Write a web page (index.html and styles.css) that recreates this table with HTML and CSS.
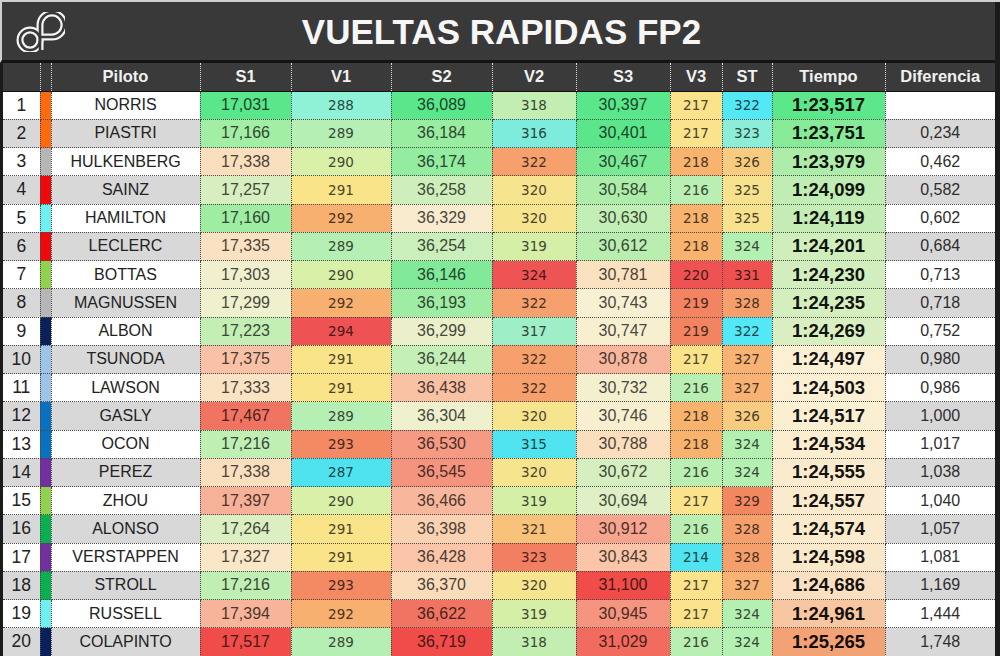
FILE: index.html
```html
<!DOCTYPE html>
<html lang="es">
<head>
<meta charset="utf-8">
<title>Vueltas Rapidas FP2</title>
<link rel="stylesheet" href="styles.css">
</head>
<body>
<div class="sheet">
  <header class="title">
    <div class="logo-cell">
      <svg class="logo" viewBox="0 0 50 40" width="50" height="40" aria-label="dP">
        <g fill="none" stroke="#f4f4f4" stroke-width="7" stroke-linecap="butt">
          <path d="M25,38 V13 A12,12 0 1 1 37,25 H25"/>
          <circle cx="15" cy="28" r="10"/>
        </g>
        <g fill="none" stroke="#393939" stroke-width="2.6">
          <path d="M25,38 V13 A12,12 0 1 1 37,25 H25"/>
          <circle cx="15" cy="28" r="10"/>
        </g>
      </svg>
    </div>
    <h1 class="heading">VUELTAS RAPIDAS FP2</h1>
    <div></div>
  </header>
  <table class="grid">
    <colgroup>
      <col class="w-pos"><col class="w-bar"><col class="w-name"><col class="w-s1"><col class="w-v1"><col class="w-s2"><col class="w-v2"><col class="w-s3"><col class="w-v3"><col class="w-st"><col class="w-tm"><col class="w-dif">
    </colgroup>
    <thead>
      <tr><th></th><th></th><th>Piloto</th><th>S1</th><th>V1</th><th>S2</th><th>V2</th><th>S3</th><th>V3</th><th>ST</th><th>Tiempo</th><th>Diferencia</th></tr>
    </thead>
    <tbody>
      <tr><td class="pos">1</td><td class="bar t-mcl"></td><td class="name">NORRIS</td><td class="sec s1">17,031</td><td class="spd v1">288</td><td class="sec s2">36,089</td><td class="spd v2">318</td><td class="sec s3">30,397</td><td class="spd v3">217</td><td class="spd st">322</td><td class="tm">1:23,517</td><td class="dif"></td></tr>
      <tr><td class="pos">2</td><td class="bar t-mcl"></td><td class="name">PIASTRI</td><td class="sec s1">17,166</td><td class="spd v1">289</td><td class="sec s2">36,184</td><td class="spd v2">316</td><td class="sec s3">30,401</td><td class="spd v3">217</td><td class="spd st">323</td><td class="tm">1:23,751</td><td class="dif">0,234</td></tr>
      <tr><td class="pos">3</td><td class="bar t-haas"></td><td class="name">HULKENBERG</td><td class="sec s1">17,338</td><td class="spd v1">290</td><td class="sec s2">36,174</td><td class="spd v2">322</td><td class="sec s3">30,467</td><td class="spd v3">218</td><td class="spd st">326</td><td class="tm">1:23,979</td><td class="dif">0,462</td></tr>
      <tr><td class="pos">4</td><td class="bar t-fer"></td><td class="name">SAINZ</td><td class="sec s1">17,257</td><td class="spd v1">291</td><td class="sec s2">36,258</td><td class="spd v2">320</td><td class="sec s3">30,584</td><td class="spd v3">216</td><td class="spd st">325</td><td class="tm">1:24,099</td><td class="dif">0,582</td></tr>
      <tr><td class="pos">5</td><td class="bar t-merc"></td><td class="name">HAMILTON</td><td class="sec s1">17,160</td><td class="spd v1">292</td><td class="sec s2">36,329</td><td class="spd v2">320</td><td class="sec s3">30,630</td><td class="spd v3">218</td><td class="spd st">325</td><td class="tm">1:24,119</td><td class="dif">0,602</td></tr>
      <tr><td class="pos">6</td><td class="bar t-fer"></td><td class="name">LECLERC</td><td class="sec s1">17,335</td><td class="spd v1">289</td><td class="sec s2">36,254</td><td class="spd v2">319</td><td class="sec s3">30,612</td><td class="spd v3">218</td><td class="spd st">324</td><td class="tm">1:24,201</td><td class="dif">0,684</td></tr>
      <tr><td class="pos">7</td><td class="bar t-sau"></td><td class="name">BOTTAS</td><td class="sec s1">17,303</td><td class="spd v1">290</td><td class="sec s2">36,146</td><td class="spd v2">324</td><td class="sec s3">30,781</td><td class="spd v3">220</td><td class="spd st">331</td><td class="tm">1:24,230</td><td class="dif">0,713</td></tr>
      <tr><td class="pos">8</td><td class="bar t-haas"></td><td class="name">MAGNUSSEN</td><td class="sec s1">17,299</td><td class="spd v1">292</td><td class="sec s2">36,193</td><td class="spd v2">322</td><td class="sec s3">30,743</td><td class="spd v3">219</td><td class="spd st">328</td><td class="tm">1:24,235</td><td class="dif">0,718</td></tr>
      <tr><td class="pos">9</td><td class="bar t-wil"></td><td class="name">ALBON</td><td class="sec s1">17,223</td><td class="spd v1">294</td><td class="sec s2">36,299</td><td class="spd v2">317</td><td class="sec s3">30,747</td><td class="spd v3">219</td><td class="spd st">322</td><td class="tm">1:24,269</td><td class="dif">0,752</td></tr>
      <tr><td class="pos">10</td><td class="bar t-rb"></td><td class="name">TSUNODA</td><td class="sec s1">17,375</td><td class="spd v1">291</td><td class="sec s2">36,244</td><td class="spd v2">322</td><td class="sec s3">30,878</td><td class="spd v3">217</td><td class="spd st">327</td><td class="tm">1:24,497</td><td class="dif">0,980</td></tr>
      <tr><td class="pos">11</td><td class="bar t-rb"></td><td class="name">LAWSON</td><td class="sec s1">17,333</td><td class="spd v1">291</td><td class="sec s2">36,438</td><td class="spd v2">322</td><td class="sec s3">30,732</td><td class="spd v3">216</td><td class="spd st">327</td><td class="tm">1:24,503</td><td class="dif">0,986</td></tr>
      <tr><td class="pos">12</td><td class="bar t-alp"></td><td class="name">GASLY</td><td class="sec s1">17,467</td><td class="spd v1">289</td><td class="sec s2">36,304</td><td class="spd v2">320</td><td class="sec s3">30,746</td><td class="spd v3">218</td><td class="spd st">326</td><td class="tm">1:24,517</td><td class="dif">1,000</td></tr>
      <tr><td class="pos">13</td><td class="bar t-alp"></td><td class="name">OCON</td><td class="sec s1">17,216</td><td class="spd v1">293</td><td class="sec s2">36,530</td><td class="spd v2">315</td><td class="sec s3">30,788</td><td class="spd v3">218</td><td class="spd st">324</td><td class="tm">1:24,534</td><td class="dif">1,017</td></tr>
      <tr><td class="pos">14</td><td class="bar t-rbr"></td><td class="name">PEREZ</td><td class="sec s1">17,338</td><td class="spd v1">287</td><td class="sec s2">36,545</td><td class="spd v2">320</td><td class="sec s3">30,672</td><td class="spd v3">216</td><td class="spd st">324</td><td class="tm">1:24,555</td><td class="dif">1,038</td></tr>
      <tr><td class="pos">15</td><td class="bar t-sau"></td><td class="name">ZHOU</td><td class="sec s1">17,397</td><td class="spd v1">290</td><td class="sec s2">36,466</td><td class="spd v2">319</td><td class="sec s3">30,694</td><td class="spd v3">217</td><td class="spd st">329</td><td class="tm">1:24,557</td><td class="dif">1,040</td></tr>
      <tr><td class="pos">16</td><td class="bar t-am"></td><td class="name">ALONSO</td><td class="sec s1">17,264</td><td class="spd v1">291</td><td class="sec s2">36,398</td><td class="spd v2">321</td><td class="sec s3">30,912</td><td class="spd v3">216</td><td class="spd st">328</td><td class="tm">1:24,574</td><td class="dif">1,057</td></tr>
      <tr><td class="pos">17</td><td class="bar t-rbr"></td><td class="name">VERSTAPPEN</td><td class="sec s1">17,327</td><td class="spd v1">291</td><td class="sec s2">36,428</td><td class="spd v2">323</td><td class="sec s3">30,843</td><td class="spd v3">214</td><td class="spd st">328</td><td class="tm">1:24,598</td><td class="dif">1,081</td></tr>
      <tr><td class="pos">18</td><td class="bar t-am"></td><td class="name">STROLL</td><td class="sec s1">17,216</td><td class="spd v1">293</td><td class="sec s2">36,370</td><td class="spd v2">320</td><td class="sec s3">31,100</td><td class="spd v3">217</td><td class="spd st">327</td><td class="tm">1:24,686</td><td class="dif">1,169</td></tr>
      <tr><td class="pos">19</td><td class="bar t-merc"></td><td class="name">RUSSELL</td><td class="sec s1">17,394</td><td class="spd v1">292</td><td class="sec s2">36,622</td><td class="spd v2">319</td><td class="sec s3">30,945</td><td class="spd v3">217</td><td class="spd st">324</td><td class="tm">1:24,961</td><td class="dif">1,444</td></tr>
      <tr><td class="pos">20</td><td class="bar t-wil"></td><td class="name">COLAPINTO</td><td class="sec s1">17,517</td><td class="spd v1">289</td><td class="sec s2">36,719</td><td class="spd v2">318</td><td class="sec s3">31,029</td><td class="spd v3">216</td><td class="spd st">324</td><td class="tm">1:25,265</td><td class="dif">1,748</td></tr>
    </tbody>
  </table>
</div>
<script src="script.js"></script>
</body>
</html>
```

FILE: styles.css
```css
* { box-sizing: border-box; }
html, body { margin: 0; padding: 0; }
body {
  background: #1b1b1b;
  font-family: "Liberation Sans", Arial, sans-serif;
}
.sheet {
  width: 1000px;
  height: 656px;
  overflow: hidden;
  background: #1b1b1b;
  border-top: 2px solid #cfcfcf;
  padding: 0 5px 0 3px;
}
.title {
  display: grid;
  grid-template-columns: 1fr auto 1fr;
  align-items: center;
  height: 61px;
  margin-left: -3px;
  padding-left: 6px;
  background: #393939;
  border-left: 2px solid #cfcfcf;
  border-bottom: 3px solid #141414;
}
.logo-cell { display: flex; align-items: center; }
.logo { display: block; margin-left: 7px; margin-top: 1px; }
.heading {
  margin: 0;
  font-size: 35px;
  font-weight: bold;
  color: #f6f6f6;
  line-height: 1;
  padding-top: 1px;
}
.grid {
  width: 992px;
  table-layout: fixed;
  border-collapse: collapse;
}
.w-pos { width: 37px; }
.w-bar { width: 11px; }
.w-name { width: 149px; }
.w-s1 { width: 91px; }
.w-v1 { width: 100px; }
.w-s2 { width: 101px; }
.w-v2 { width: 84px; }
.w-s3 { width: 94px; }
.w-v3 { width: 52px; }
.w-st { width: 50px; }
.w-tm { width: 113px; }
.w-dif { width: 110px; }

.grid th {
  height: 28px;
  padding: 0;
  background: #3a3a3a;
  color: #f0f0f0;
  font-size: 16.5px;
  font-weight: bold;
  text-align: center;
  border-left: 1px dotted #d8d8d8;
  border-bottom: 1px solid #111;
}
.grid th:first-child { border-left: none; }
.grid td {
  height: 28.25px;
  padding: 0;
  text-align: center;
  font-size: 16px;
  color: #262626;
  border: 1px dotted #4a4a4a;
  white-space: nowrap;
}
.grid tbody tr:first-child td { border-top: none; }
.grid td:first-child { border-left: none; }
.grid td:last-child { border-right: none; }

.grid .pos, .grid .name, .grid .dif { background: #ffffff; }
.grid tbody tr:nth-child(even) .pos,
.grid tbody tr:nth-child(even) .name,
.grid tbody tr:nth-child(even) .dif { background: #d8d8d8; }
.grid .pos { font-size: 17.5px; color: #222; }
.grid .name { color: #222; }
.grid .dif { color: #2e2e2e; font-size: 16px; }

.grid .spd {
  font-family: "DejaVu Sans", Verdana, sans-serif;
  font-size: 13.5px;
}
.grid .tm { font-size: 18.5px; font-weight: bold; color: #111; }

.t-mcl { background: #ff6a0e; }
.t-haas { background: #b6b6b6; }
.t-fer { background: #ee0a0a; }
.t-merc { background: #6ef0f0; }
.t-sau { background: #92d050; }
.t-wil { background: #0b1f5a; }
.t-rb { background: #9dc3e6; }
.t-alp { background: #0a70c0; }
.t-rbr { background: #7030a0; }
.t-am { background: #0ab050; }
```

FILE: script.js
```js
(function () {
  function hx(h) { return [1, 3, 5].map(function (i) { return parseInt(h.substr(i, 2), 16); }); }
  function mix(a, b, f) { return a.map(function (v, i) { return Math.round(v + (b[i] - v) * f); }); }
  function ramp(stops, t) {
    t = Math.max(0, Math.min(1, t));
    for (var i = 1; i < stops.length; i++) {
      if (t <= stops[i][0]) {
        var t0 = stops[i - 1][0], t1 = stops[i][0];
        return mix(hx(stops[i - 1][1]), hx(stops[i][1]), (t - t0) / (t1 - t0));
      }
    }
    return hx(stops[stops.length - 1][1]);
  }
  function rgb(c) { return 'rgb(' + c.join(',') + ')'; }
  function num(s) {
    s = s.trim().replace(',', '.');
    if (s.indexOf(':') >= 0) { var p = s.split(':'); return (+p[0]) * 60 + (+p[1]); }
    return +s;
  }
  function paint(cell, col, k) {
    cell.style.background = rgb(col);
    cell.style.color = rgb(col.map(function (x) { return Math.round(x * k); }));
  }
  var SEC = [[0, '#5ae68a'], [0.25, '#a6eea6'], [0.5, '#f8f0d2'], [0.58, '#fbd8b6'], [0.7, '#f8b29a'], [0.85, '#f27c68'], [1, '#ef4c4a']];
  var TIME = [[0, '#5ce88a'], [0.2, '#a4eca4'], [0.5, '#fbf0d4'], [0.75, '#f9d0ac'], [1, '#f3a276']];
  function scale(cls, stops, k) {
    var cells = Array.prototype.slice.call(document.querySelectorAll('td.' + cls));
    var vals = cells.map(function (c) { return num(c.textContent); });
    var s = vals.slice().sort(function (a, b) { return a - b; });
    var n = s.length, min = s[0], max = s[n - 1];
    var med = n % 2 ? s[(n - 1) / 2] : (s[n / 2 - 1] + s[n / 2]) / 2;
    cells.forEach(function (c, i) {
      var v = vals[i];
      var t = v <= med ? 0.5 * (v - min) / (med - min) : 0.5 + 0.5 * (v - med) / (max - med);
      paint(c, ramp(stops, t), k);
    });
  }
  var MAPS = {
    v1: { 287: '#4fe3ef', 288: '#8ff2d6', 289: '#b6efb4', 290: '#d9f0a8', 291: '#f9e48a', 292: '#f7b070', 293: '#f38a64', 294: '#ef5252' },
    v2: { 315: '#50e4f0', 316: '#7eecdc', 317: '#9eefc8', 318: '#c2eeb2', 319: '#d6efa6', 320: '#f7e48e', 321: '#f8c27a', 322: '#f6a06e', 323: '#f27f62', 324: '#ef5454' },
    v3: { 214: '#50e4f0', 216: '#b9efb2', 217: '#fae38a', 218: '#f8b46e', 219: '#f28462', 220: '#ef5252' },
    st: { 322: '#52e8f6', 323: '#8ceed8', 324: '#b4f0b2', 325: '#f6e28e', 326: '#f8cc80', 327: '#f8b274', 328: '#f5a06c', 329: '#f28862', 331: '#ef5050' }
  };
  Object.keys(MAPS).forEach(function (cls) {
    document.querySelectorAll('td.' + cls).forEach(function (c) {
      var col = MAPS[cls][c.textContent.trim()];
      if (col) paint(c, hx(col), 0.3);
    });
  });
  scale('s1', SEC, 0.3);
  scale('s2', SEC, 0.3);
  scale('s3', SEC, 0.3);
  scale('tm', TIME, 0.08);
})();
```
